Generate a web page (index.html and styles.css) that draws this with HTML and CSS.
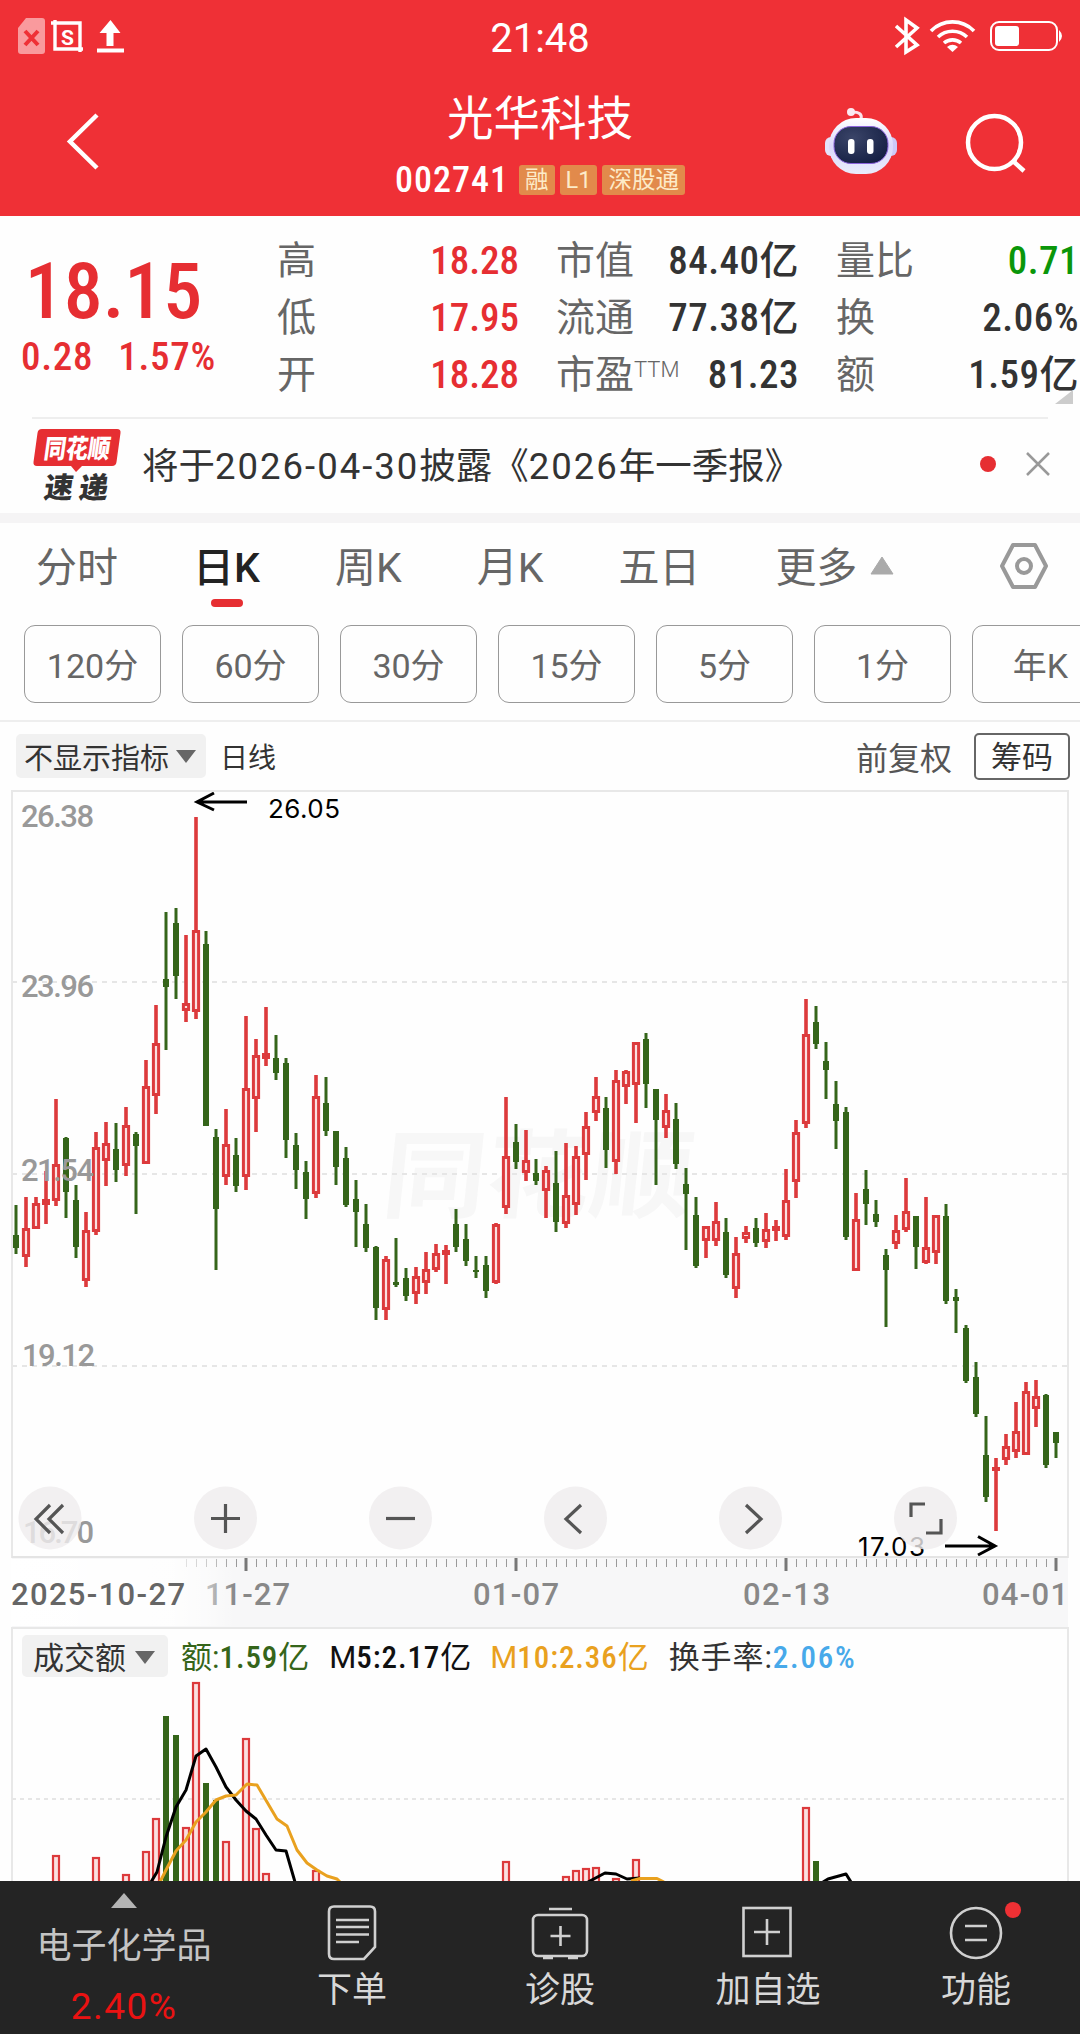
FILE: index.html
```html
<!DOCTYPE html>
<html lang="zh-CN">
<head>
    <meta charset="UTF-8">
    <meta name="viewport" content="width=device-width, initial-scale=1.0">
    <title>光华科技 002741</title>
    <link rel="stylesheet" href="styles.css">
</head>
<body>
    <header class="header">
        <div class="status-bar">
            <svg class="status-left" width="130" height="60" viewBox="0 0 130 60">
                <path d="M26 18h16a3 3 0 0 1 3 3v30a3 3 0 0 1-3 3H21a3 3 0 0 1-3-3V28z" fill="#f99a9d"/>
                <path d="M25 31l13 14M38 31L25 45" stroke="#ef3036" stroke-width="4"/>
                <path d="M51 23h29v29M55 20v29h28" fill="none" stroke="#fff" stroke-width="3.400"/>
                <text x="67.500" y="45" text-anchor="middle" class="status-s">S</text>
                <path d="M110.500 20l10 13h-7v13h-7V33h-7z" fill="#fff"/>
                <path d="M97 50.500h27" stroke="#fff" stroke-width="4"/>
            </svg>
            <span class="clock">21:48</span>
            <svg class="status-right" width="190" height="60" viewBox="890 0 190 60">
                <g fill="none" stroke="#fff" stroke-width="3.600">
                    <path d="M896 26l21 19-11 7V20l11 8-21 19"/>
                    <path d="M931 31a30 30 0 0 1 43 0M938 37a21 21 0 0 1 29 0M944 43a13 13 0 0 1 17 0"/>
                    <rect x="991" y="22" width="66" height="28" rx="8" stroke-width="2"/>
                </g>
                <path d="M947 47q5.500-4.500 11 0l-5.500 5z" fill="#fff"/>
                <rect x="995" y="26" width="24" height="20" rx="3" fill="#fff"/>
                <path d="M1059 30q6 6 0 12z" fill="#fff"/>
            </svg>
        </div>
        <div class="title-bar">
            <svg width="280" height="156" viewBox="0 60 280 156">
                <path d="M97 115L70 141.500 97 168" fill="none" stroke="#fff" stroke-width="4.500"/>
            </svg>
            <div class="title">
                <h1>光华科技</h1>
                <div class="code-row">
                    <span class="code">002741</span>
                    <span class="tag">融</span>
                    <span class="tag">L1</span>
                    <span class="tag">深股通</span>
                </div>
            </div>
            <svg width="280" height="156" viewBox="800 60 280 156">
                <defs>
                    <linearGradient id="shell" x1="0" y1="0" x2="0" y2="1">
                        <stop offset="0" stop-color="#fff"/>
                        <stop offset="0.500" stop-color="#dcd8fa"/>
                        <stop offset="1" stop-color="#e9ecfc"/>
                    </linearGradient>
                    <radialGradient id="visor" cx="0.350" cy="0.300" r="0.800">
                        <stop offset="0" stop-color="#3a4468"/>
                        <stop offset="1" stop-color="#141e42"/>
                    </radialGradient>
                </defs>
                <path d="M861 119q2-7-9-7" fill="none" stroke="#fbe3ea" stroke-width="3"/>
                <circle cx="851" cy="112" r="4" fill="#fbe9f0"/>
                <rect x="825" y="137" width="14" height="19" rx="6" fill="#e4e2fb"/>
                <rect x="883" y="137" width="14" height="19" rx="6" fill="#cdc9f7"/>
                <rect x="829" y="118" width="64" height="56" rx="27" fill="url(#shell)"/>
                <rect x="834" y="126.500" width="54" height="37" rx="17" fill="url(#visor)" stroke="#8b63dc"/>
                <rect x="848" y="139" width="6.500" height="15" rx="3" fill="#fff"/>
                <rect x="867" y="139" width="6.500" height="15" rx="3" fill="#fff"/>
                <circle cx="994.500" cy="142.500" r="26.500" fill="none" stroke="#fff" stroke-width="4.500"/>
                <path d="M1013 161l11 10" stroke="#fff" stroke-width="4.500"/>
            </svg>
        </div>
    </header>

    <section class="quote">
        <div class="price">
            <div class="last">18.15</div>
            <div class="change"><span>0.28</span><span>1.57%</span></div>
        </div>
        <dl class="stats stats-a">
            <dt>高</dt><dd class="up">18.28</dd>
            <dt>低</dt><dd class="up">17.95</dd>
            <dt>开</dt><dd class="up">18.28</dd>
        </dl>
        <dl class="stats stats-b">
            <dt>市值</dt><dd>84.40亿</dd>
            <dt>流通</dt><dd>77.38亿</dd>
            <dt>市盈<sup>TTM</sup></dt><dd>81.23</dd>
        </dl>
        <dl class="stats stats-c">
            <dt>量比</dt><dd class="down">0.71</dd>
            <dt>换</dt><dd>2.06%</dd>
            <dt>额</dt><dd>1.59亿</dd>
        </dl>
        <span class="fold"></span>
    </section>

    <section class="news">
        <svg class="news-logo" width="90" height="84" viewBox="32 421 90 84">
            <path d="M42 428h75q4 0 3.500 4l-4 29q-.5 4-4.500 4H82l-6 6-5-6H37q-4 0-3.500-4l4-29q.5-4 4.500-4z" fill="#e62e32"/>
            <text transform="translate(43 456.500) skewX(-8)" class="logo-top" textLength="66" lengthAdjust="spacingAndGlyphs">同花顺</text>
            <text transform="translate(43 496.500) skewX(-8)" class="logo-bottom" textLength="64">速递</text>
        </svg>
        <p>将于<b>2026-04-30</b>披露《<b>2026</b>年一季报》</p>
        <i class="dot"></i>
        <svg width="26" height="26" viewBox="0 0 26 26"><path d="M2 2l22 22M24 2L2 24" stroke="#999" stroke-width="2.500"/></svg>
    </section>

    <nav class="tabs">
        <span>分时</span>
        <span class="active">日K</span>
        <span>周K</span>
        <span>月K</span>
        <span>五日</span>
        <span class="more">更多<svg width="24" height="20" viewBox="0 0 24 20"><path d="M12 1l11 17H1z" fill="#aaa" stroke="#aaa" stroke-linejoin="round"/></svg></span>
        <svg class="settings" width="50" height="48" viewBox="0 0 50 48">
            <path d="M14 3h22l11 21-11 21H14L3 24z" fill="none" stroke="#999" stroke-width="4" stroke-linejoin="round"/>
            <circle cx="25" cy="24" r="7" fill="none" stroke="#999" stroke-width="4"/>
        </svg>
    </nav>
    <div class="periods">
        <span>120分</span>
        <span>60分</span>
        <span>30分</span>
        <span>15分</span>
        <span>5分</span>
        <span>1分</span>
        <span>年K</span>
    </div>

    <div class="toolbar">
        <span class="select">不显示指标<i class="caret"></i></span>
        <span class="line-name">日线</span>
        <span class="adjust">前复权</span>
        <span class="chips">筹码</span>
    </div>

    <svg class="kline" id="kline" width="1080" height="847" viewBox="0 780 1080 847">
        <defs>
            <linearGradient id="axisFade" x1="0" x2="1" y1="0" y2="0">
                <stop offset="0" stop-color="#fff"/>
                <stop offset="0.400" stop-color="#fff" stop-opacity="0.850"/>
                <stop offset="0.490" stop-color="#fff" stop-opacity="0.500"/>
                <stop offset="0.560" stop-color="#fff" stop-opacity="0"/>
            </linearGradient>
        </defs>
        <text transform="translate(380 1210) skewX(-6)" class="watermark" textLength="310" lengthAdjust="spacingAndGlyphs">同花顺</text>
        <g stroke="#e6e6e6" stroke-width="2" stroke-dasharray="5 5">
            <path d="M12 982H1068M12 1174H1068M12 1366H1068"/>
        </g>
        <g id="candles"></g>
        <g class="price-axis">
            <text x="21" y="827" textLength="73">26.38</text>
            <text x="21" y="997" textLength="73">23.96</text>
            <text x="21" y="1181" textLength="73">21.54</text>
            <text x="22" y="1366" textLength="73">19.12</text>
            <text x="23" y="1543" textLength="71">16.70</text>
        </g>
        <g class="mark">
            <path d="M247 802H198M214 793L197 802 214 810"/>
            <text x="268" y="818" textLength="72">26.05</text>
            <path d="M945 1546H994M978 1536.500L995 1546 978 1555"/>
            <text x="858" y="1556" textLength="67">17.03</text>
        </g>
        <rect x="12" y="1558" width="1056" height="69" fill="#f7f7f8"/>
        <path d="M12 1558V791H1068V1558" fill="none" stroke="#e8e8e8" stroke-width="2"/>
        <path d="M12 1557H1068" stroke="#e4e4e4" stroke-width="2"/>
        <g id="ticks"></g>
        <g class="dates">
            <text x="205" y="1605" textLength="85">11-27</text>
            <text x="473" y="1605" textLength="86">01-07</text>
            <text x="743" y="1605" textLength="87">02-13</text>
            <text x="982" y="1605" textLength="86">04-01</text>
            <rect x="11" y="1559" width="400" height="67" fill="url(#axisFade)"/>
            <text x="11" y="1605" textLength="174" class="first-date">2025-10-27</text>
        </g>
        <g fill="#efecee" fill-opacity="0.800">
            <circle cx="50" cy="1518" r="31.500"/>
            <circle cx="225.500" cy="1518" r="31.500"/>
            <circle cx="400.500" cy="1518" r="31.500"/>
            <circle cx="575.500" cy="1518" r="31.500"/>
            <circle cx="750.500" cy="1518" r="31.500"/>
            <circle cx="925.500" cy="1518" r="31.500"/>
        </g>
        <g fill="none" stroke="#555" stroke-width="3.200">
            <path d="M50 1505L36 1519 50 1533M63 1505L49 1519 63 1533"/>
            <path d="M211 1518.500H240M225.500 1504V1533"/>
            <path d="M386 1518.500H415"/>
            <path d="M581 1505L566 1519 581 1533"/>
            <path d="M746 1505L761 1519 746 1533"/>
            <path d="M911 1517V1504H925M941 1519V1533H926"/>
        </g>
    </svg>

    <section class="turnover">
        <div class="legend">
            <span class="select">成交额<i class="caret"></i></span>
            <span class="amt">额:<b>1.59</b>亿</span>
            <span class="m5">M<b>5:2.17</b>亿</span>
            <span class="m10">M<b>10:2.36</b>亿</span>
            <span class="rate">换手率:<b>2.06%</b></span>
        </div>
        <svg class="volume" width="1056" height="202" viewBox="12 1679 1056 202">
            <path d="M12 1799H1068" stroke="#e6e6e6" stroke-width="2" stroke-dasharray="4 4"/>
            <g id="bars"></g>
            <g fill="none" stroke-width="3" stroke-linejoin="round">
                <path stroke="#000" d="M151 1882L157 1872 166 1837 176 1807 186 1790 196 1756 206 1749 216 1767 226 1787 236 1800 246 1811 256 1819 266 1835 276 1850 286 1851 295 1882M588 1882L605 1873 616 1874 627 1879 640 1878M823 1882L828 1879 846 1874 851 1882"/>
                <path stroke="#e9a11f" d="M160 1882L166 1870 176 1851 186 1840 196 1822 206 1812 216 1800 226 1796 236 1795 247 1784 257 1785 267 1802 277 1819 287 1826 297 1850 307 1863 317 1870 327 1876 337 1879 340 1882M631 1881L640 1878.500H657L664 1882"/>
            </g>
        </svg>
    </section>

    <footer class="bottom">
        <div class="sector">
            <i class="tri-up"></i>
            <span>电子化学品</span>
            <em>2.40%</em>
        </div>
        <div class="action">
            <svg width="60" height="60" viewBox="0 0 60 60">
                <path d="M12 5.500h36q5 0 5 5V46L42 58H12q-5 0-5-5V10.500q0-5 5-5z"/>
                <path d="M14 19h33M14 26h33M14 33.500h33M14 41h23"/>
            </svg>
            <span>下单</span>
        </div>
        <div class="action">
            <svg width="60" height="60" viewBox="0 0 60 60">
                <rect x="3" y="14" width="54" height="41" rx="5"/>
                <path d="M19 8h23M30.500 25v20M20.500 35h20M13 57h10M38 57h10"/>
            </svg>
            <span>诊股</span>
        </div>
        <div class="action">
            <svg width="60" height="60" viewBox="0 0 60 60">
                <rect x="5.500" y="7" width="47" height="48"/>
                <path d="M29 18v26M16 31h26"/>
            </svg>
            <span>加自选</span>
        </div>
        <div class="action">
            <svg width="60" height="60" viewBox="0 0 60 60">
                <circle cx="30" cy="32" r="25"/>
                <path d="M19 25h22M19 39h22"/>
            </svg>
            <span>功能</span>
            <i class="badge"></i>
        </div>
    </footer>

    <script src="chart.js"></script>
</body>
</html>
```
FILE: styles.css
```css
* {
    box-sizing: border-box;
}
body {
    margin: 0;
    width: 1080px;
    height: 2034px;
    overflow: hidden;
    background: #fefefe;
    color: #333;
    font-family: Roboto, "Noto Sans CJK SC", sans-serif;
    display: flex;
    flex-direction: column;
}
svg {
    display: block;
    flex: none;
}
i, em {
    font-style: normal;
}

/* header */
.header {
    height: 216px;
    background: #ef3036;
    color: #fff;
}
.status-bar {
    height: 60px;
    display: flex;
    justify-content: space-between;
}
.status-left {
    margin-right: 60px;
}
.status-s {
    font: bold 21px Roboto, sans-serif;
    fill: #fff;
}
.clock {
    font-size: 40px;
    line-height: 77px;
}
.title-bar {
    height: 156px;
    display: flex;
    justify-content: space-between;
}
.title {
    padding-top: 28px;
    text-align: center;
}
h1 {
    margin: 0;
    font-size: 46.5px;
    line-height: 62px;
    font-weight: 400;
}
.code-row {
    display: flex;
    justify-content: center;
    align-items: center;
    gap: 5px;
    margin-top: 15px;
    height: 30px;
}
.code {
    font-size: 36px;
    font-weight: 500;
    font-stretch: 80%;
    letter-spacing: 1px;
    margin-right: 5px;
}
.tag {
    background: #e28a4b;
    color: #fdebc8;
    border-radius: 3px;
    font-size: 23.5px;
    line-height: 30px;
    height: 30px;
    padding: 0 6px;
}

/* quote */
.quote {
    position: relative;
    height: 201px;
    display: flex;
    padding-top: 17px;
}
.price {
    width: 227px;
    margin-right: 50px;
    color: #e62e32;
    text-align: center;
    font-weight: 500;
}
.last {
    font-size: 78px;
    line-height: 92px;
    margin-top: 13px;
    font-stretch: 80%;
}
.change {
    display: flex;
    justify-content: center;
    gap: 25px;
    font-size: 39px;
    line-height: 46px;
    margin: -4px 0 0 10px;
    font-stretch: 80%;
    letter-spacing: 0.7px;
}
.stats {
    margin: 0;
    display: grid;
    grid-template-columns: 80px 1fr;
    grid-auto-rows: 57px;
    line-height: 57px;
}
.stats dt {
    font-size: 39px;
    color: #666;
    white-space: nowrap;
}
.stats dd {
    margin: 0;
    font-size: 39px;
    font-weight: 500;
    font-stretch: 80%;
    text-align: right;
    white-space: nowrap;
}
.stats sup {
    font-size: 22px;
    font-weight: 300;
    line-height: 0;
    vertical-align: 11px;
}
.stats-a {
    width: 242px;
    margin-right: 37px;
}
.stats-b {
    width: 243px;
    margin-right: 37px;
}
.stats-b dd, .stats-c dd {
    letter-spacing: 0.5px;
}
.stats-c {
    width: 243px;
}
.stats dd.up {
    color: #e62e32;
}
.stats dd.down {
    color: #0a960a;
}
.fold {
    position: absolute;
    right: 7px;
    bottom: 13px;
    border-left: 18px solid transparent;
    border-bottom: 14px solid #ccc;
}

/* news */
.news {
    height: 106px;
    display: flex;
    align-items: center;
    padding: 0 29px 3px 32px;
    border-bottom: 10px solid #f5f4f5;
    background: linear-gradient(#eee, #eee) 32px 0 / 1016px 2px no-repeat;
}
.news-logo {
    overflow: visible;
}
.news p {
    margin: 0 auto 0 20px;
    font-size: 36.5px;
}
.news b {
    font-weight: 400;
    letter-spacing: 2px;
}
.logo-top {
    font: 900 26px "Noto Sans CJK SC", sans-serif;
    fill: #fff;
}
.logo-bottom {
    font: 900 29px "Noto Sans CJK SC", sans-serif;
    fill: #333;
}
.dot {
    width: 16px;
    height: 16px;
    border-radius: 50%;
    background: #e62e32;
    margin-right: 29px;
}

/* tabs */
.tabs {
    height: 102px;
    display: flex;
    padding: 15px 31px 0 36px;
    gap: 75px;
    font-size: 41px;
    line-height: 60px;
    color: #666;
}
.tabs .active {
    position: relative;
    color: #222;
    font-weight: 500;
}
.tabs .active::after {
    content: "";
    position: absolute;
    left: 50%;
    top: 61px;
    width: 32px;
    height: 8px;
    margin-left: -15px;
    border-radius: 4px;
    background: #e62e32;
}
.more {
    display: flex;
    align-items: center;
    height: 60px;
    gap: 13px;
}
.more svg {
    margin-top: -4px;
}
.settings {
    margin: 4px 0 0 auto;
}
.periods {
    height: 97px;
    display: flex;
    gap: 21px;
    padding-left: 24px;
    border-bottom: 2px solid #eee;
}
.periods span {
    flex: none;
    width: 137px;
    height: 78px;
    border: 1px solid #999;
    border-radius: 11px;
    text-align: center;
    font-size: 34px;
    line-height: 80px;
    color: #666;
}

/* chart */
.toolbar {
    height: 58px;
    display: flex;
    align-items: center;
    padding: 10px 10px 0 16px;
    font-size: 29px;
}
.select {
    background: #f1f1f1;
    border-radius: 5px;
    display: flex;
    align-items: center;
    padding: 0 10px 0 8px;
    gap: 7px;
    height: 44px;
}
.caret {
    border: 10px solid transparent;
    border-top: 13px solid #666;
    border-bottom: 0;
}
.line-name {
    margin-left: 14px;
    font-size: 28px;
}
.adjust {
    margin-left: auto;
    font-size: 32px;
    line-height: 50px;
    padding-top: 5px;
    color: #555;
}
.chips {
    margin-left: 22px;
    width: 96px;
    height: 47px;
    line-height: 45px;
    text-align: center;
    border: 2px solid #666;
    border-radius: 5px;
    font-size: 31px;
}
.watermark {
    font: 700 96px "Noto Sans CJK SC", sans-serif;
    fill: #f7f7f7;
}
.up-bar {
    fill: #fbe0e0;
    stroke: #dc3a3c;
    stroke-width: 3;
}
.vol {
    stroke-width: 2.2;
}
.up-wick {
    fill: #dc3a3c;
}
.down-bar {
    fill: #35651a;
}
.price-axis, .dates {
    font: 500 31px Roboto, sans-serif;
    fill: #999;
}
.dates {
    fill: #888;
}
.first-date {
    fill: #666;
}
.mark {
    font: 26px Inter, sans-serif;
}
.mark path {
    fill: none;
    stroke: #000;
    stroke-width: 3;
}
.turnover {
    width: 1058px;
    height: 254px;
    margin-left: 11px;
    border: 2px solid #e8e8e8;
    border-bottom: 0;
}
.legend {
    display: flex;
    align-items: center;
    height: 50px;
    padding: 6px 0 0 9px;
    font-size: 31px;
    line-height: 50px;
    white-space: nowrap;
}
.legend .select {
    height: 42px;
    padding: 6px 13px 0 11px;
    gap: 9px;
    margin-bottom: 2px;
}
.legend .caret {
    margin-top: -4px;
}
.legend > span:not(.select) {
    padding-top: 2px;
}
.legend b {
    font-weight: 500;
    font-stretch: 80%;
    letter-spacing: 0.9px;
}
.amt {
    margin-left: 13px;
    color: #35651a;
}
.m5 {
    margin-left: 20px;
    color: #111;
}
.m10 {
    margin-left: 19px;
    color: #e9a11f;
}
.rate {
    margin-left: 20px;
    letter-spacing: 0.9px;
}
.rate b {
    color: #47a9ea;
    letter-spacing: 1.8px;
}
.volume {
    margin-left: -1px;
}

/* bottom bar */
.bottom {
    height: 153px;
    background: #242424;
    color: #d8d8d8;
    display: flex;
    font-size: 35px;
}
.sector {
    width: 248px;
    display: flex;
    flex-direction: column;
    align-items: center;
    color: #c4c4c4;
}
.tri-up {
    margin-top: 12px;
    border: 13px solid transparent;
    border-top: 0;
    border-bottom: 15px solid #b4b4b4;
}
.sector span {
    line-height: 50px;
    margin-top: 14px;
}
.sector em {
    color: #ea1212;
    line-height: 46px;
    margin-top: 12px;
    font-size: 37px;
    letter-spacing: 1.5px;
}
.action {
    position: relative;
    width: 208px;
    display: flex;
    flex-direction: column;
    align-items: center;
    padding-top: 20px;
}
.action svg {
    fill: none;
    stroke: #d0d0d0;
    stroke-width: 2.6;
}
.action span {
    line-height: 50px;
    margin-top: 5px;
}
.badge {
    position: absolute;
    left: 133px;
    top: 21px;
    width: 16px;
    height: 16px;
    border-radius: 50%;
    background: #ee3034;
}
```
FILE: chart.js
```js
const NS = "http://www.w3.org/2000/svg";

function rect(parent, x, y, width, height, cls) {
    const el = document.createElementNS(NS, "rect");
    el.setAttribute("x", x);
    el.setAttribute("y", y);
    el.setAttribute("width", width);
    el.setAttribute("height", Math.max(height, 0));
    el.setAttribute("class", cls);
    parent.appendChild(el);
}

// direction, high, body top, body bottom, low
const candles = `
g 1205 1235 1248 1254, r 1197 1228 1257 1267, r 1197 1203 1229 1229, r 1171 1199 1205 1224,
r 1099 1164 1201 1206, g 1137 1138 1192 1218, g 1185 1200 1247 1258, r 1212 1230 1281 1287,
r 1132 1147 1232 1235, r 1122 1143 1161 1186, g 1123 1149 1170 1182, r 1107 1125 1166 1176,
g 1132 1134 1146 1214, r 1060 1086 1164 1164, r 1005 1043 1096 1114, g 912 979 987 1050,
g 908 923 976 999, r 935 1003 1011 1022, r 817 930 1012 1019, g 931 944 1126 1126,
g 1129 1137 1209 1270, r 1109 1144 1177 1185, g 1138 1155 1186 1192, r 1016 1088 1177 1190,
r 1039 1055 1099 1132, r 1007 1053 1059 1066, g 1035 1058 1073 1080, g 1058 1063 1140 1158,
g 1133 1145 1170 1189, g 1161 1172 1199 1219, r 1075 1096 1194 1198, g 1077 1103 1131 1136,
g 1131 1131 1167 1185, g 1147 1158 1205 1207, g 1180 1199 1212 1247, g 1204 1224 1248 1252,
g 1246 1247 1308 1320, r 1256 1259 1310 1320, g 1238 1282 1285 1287, g 1268 1278 1296 1301,
r 1267 1276 1294 1304, r 1252 1269 1283 1294, r 1244 1253 1270 1272, r 1245 1250 1255 1284,
g 1209 1224 1247 1252, g 1224 1239 1261 1266, g 1256 1270 1272 1278, g 1256 1265 1291 1298,
r 1223 1224 1283 1284, r 1097 1156 1208 1214, g 1124 1142 1162 1169, r 1130 1160 1173 1181,
g 1159 1173 1181 1185, r 1166 1170 1191 1218, g 1151 1183 1222 1232, r 1143 1195 1224 1228,
r 1146 1156 1205 1215, r 1112 1126 1155 1180, r 1077 1096 1113 1121, g 1097 1108 1150 1168,
r 1070 1080 1162 1174, r 1070 1071 1087 1104, r 1042 1042 1085 1123, g 1033 1039 1084 1108,
g 1089 1089 1120 1185, r 1094 1110 1128 1138, g 1103 1119 1164 1169, g 1168 1184 1194 1250,
g 1197 1215 1266 1268, r 1226 1226 1241 1258, r 1202 1221 1241 1246, g 1218 1232 1275 1278,
r 1237 1253 1289 1298, r 1226 1232 1239 1243, g 1218 1228 1243 1247, r 1213 1229 1242 1248,
r 1220 1226 1231 1241, r 1169 1200 1237 1240, r 1120 1132 1182 1198, r 999 1034 1124 1128,
g 1006 1022 1044 1049, g 1042 1061 1070 1099, g 1081 1104 1121 1149, g 1107 1112 1237 1240,
r 1193 1219 1271 1271, g 1170 1189 1204 1225, g 1200 1214 1222 1227, g 1249 1255 1270 1327,
r 1215 1230 1244 1249, r 1178 1211 1230 1232, g 1216 1216 1247 1269, r 1197 1247 1263 1264,
r 1215 1215 1253 1264, g 1204 1216 1301 1304, g 1289 1297 1301 1333, g 1325 1328 1381 1383,
g 1362 1377 1414 1417, g 1416 1455 1497 1502, r 1458 1467 1471 1531, r 1434 1446 1460 1465,
r 1402 1431 1452 1458, r 1382 1391 1455 1455, r 1380 1396 1409 1427, g 1394 1395 1465 1468,
g 1432 1432 1443 1458`.split(",").map(row => row.trim().split(" "));

const candleLayer = document.getElementById("candles");
candles.forEach(([dir, ...v], i) => {
    const [high, top, bottom, low] = v.map(Number);
    const x = 16 + i * 10;
    if (dir === "g") {
        rect(candleLayer, x - 1.5, high, 3, low - high, "down-bar");
        rect(candleLayer, x - 3, top, 6, bottom - top, "down-bar");
    } else {
        rect(candleLayer, x - 1.8, high, 3.6, low - high, "up-wick");
        if (bottom - top < 7) {
            rect(candleLayer, x - 4, top, 8, bottom - top, "up-wick");
        } else {
            rect(candleLayer, x - 2.6, top + 1.5, 5.2, bottom - top - 3, "up-bar");
        }
    }
});

// small tick for every trading day, tall tick above a date
const tickLayer = document.getElementById("ticks");
for (let x = 186; x <= 1056; x += 10) {
    const major = [246, 516, 786, 1056].includes(x);
    const el = document.createElementNS(NS, "path");
    el.setAttribute("d", major ? `M${x} 1558V1571` : `M${x + 0.5} 1559V1567`);
    el.setAttribute("stroke", major ? "#777" : "#999");
    el.setAttribute("stroke-width", major ? 3 : 1);
    tickLayer.appendChild(el);
}

// candle index, bar top
const bars = [
    [4, 1855], [8, 1857], [11, 1874], [13, 1851], [14, 1818], [15, 1716], [16, 1735],
    [17, 1827], [18, 1682], [19, 1783], [20, 1800], [21, 1841], [23, 1738], [24, 1828],
    [25, 1873], [30, 1870], [49, 1861], [55, 1876], [56, 1870], [57, 1868], [58, 1867],
    [60, 1878], [62, 1859], [79, 1807], [80, 1861]
];
const barLayer = document.getElementById("bars");
bars.forEach(([i, top]) => {
    const x = 16 + i * 10;
    if (candles[i][0] === "g") {
        rect(barLayer, x - 3, top, 6, 1890 - top, "down-bar");
    } else {
        rect(barLayer, x - 3, top + 1, 6, 1890 - top, "up-bar vol");
    }
});
```
